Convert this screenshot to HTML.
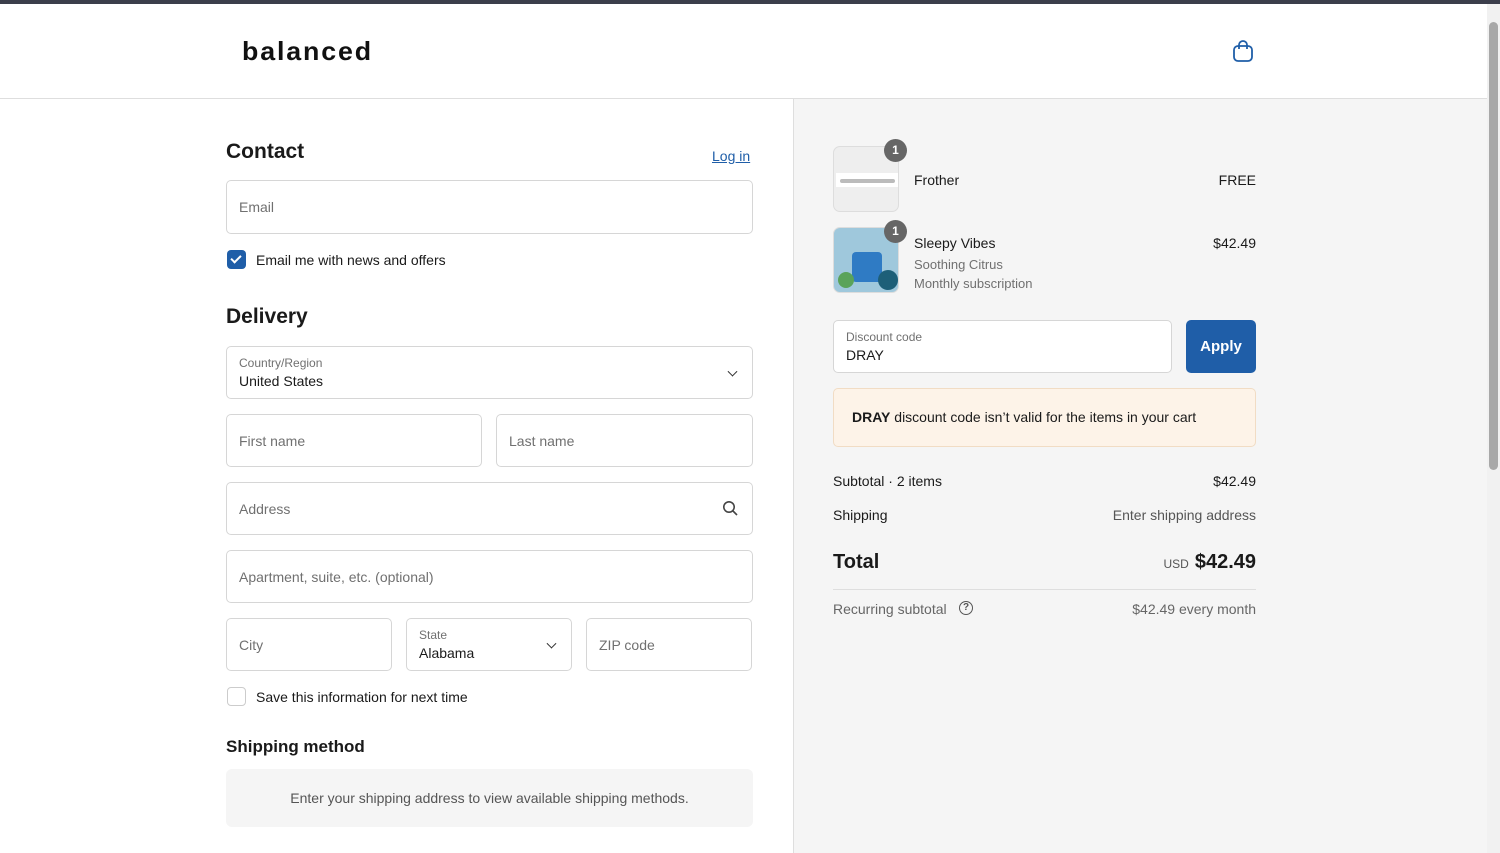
<!DOCTYPE html>
<html><head><style>
*{box-sizing:border-box;margin:0;padding:0}
body{width:1500px;height:853px;overflow:hidden;font-family:"Liberation Sans",sans-serif;color:#1a1a1a;background:#fff;position:relative}
.top{position:absolute;left:0;top:0;width:1500px;height:4px;background:#3b3e4b}
.hdr{position:absolute;left:0;top:4px;width:1487px;height:95px;border-bottom:1px solid #dedede;background:#fff}
.logo{position:absolute;left:242px;top:32px;font-size:26px;letter-spacing:1.8px;font-weight:bold;color:#111;transform:scaleX(1.03);transform-origin:left}
.right{position:absolute;left:793px;top:99px;width:694px;height:754px;background:#f5f5f5;border-left:1px solid #dedede}
.sb{position:absolute;left:1487px;top:4px;width:13px;height:849px;background:#f1f1f1}
.sb div{position:absolute;left:2px;top:18px;width:9px;height:448px;background:#a8a8a8;border-radius:5px}
.in{position:absolute;border:1px solid #d6d6d6;border-radius:5px;background:#fff;font-size:14px;color:#707070}
.in .p{position:absolute;left:12px;top:50%;transform:translateY(-50%)}
.lab{position:absolute;left:12px;top:9px;font-size:12px;color:#707070}
.val{position:absolute;left:12px;top:26px;font-size:14px;color:#1a1a1a}
h2{position:absolute;font-size:21px;font-weight:bold}
.t{position:absolute;font-size:14px}
.r{position:absolute;font-size:14px;right:244px;text-align:right;white-space:nowrap}
.chev{position:absolute;right:16px;top:50%;width:7px;height:7px;border-right:1.6px solid #333;border-bottom:1.6px solid #333;transform:translateY(-70%) rotate(45deg)}
.thumb{position:absolute;width:66px;height:66px;border-radius:7px;border:1px solid #ddd;background:#eee;overflow:hidden}
.badge{position:absolute;width:23px;height:23px;border-radius:50%;background:#666;color:#fff;font-size:12px;font-weight:bold;text-align:center;line-height:23px}
</style></head><body>
<div class="top"></div>
<div class="hdr"><div class="logo">balanced</div>
<svg style="position:absolute;left:1232px;top:35px" width="22" height="24" viewBox="0 0 22 24" fill="none" stroke="#1f5ea8" stroke-width="1.8"><rect x="2" y="7" width="18" height="15" rx="4"/><path d="M7 10V6a4 4 0 0 1 8 0v4"/></svg>
</div>
<div class="right"></div>
<div class="sb"><div></div></div>

<h2 style="left:226px;top:140px">Contact</h2>
<div class="t" style="left:712px;top:148px;color:#1f5ea8;text-decoration:underline">Log in</div>
<div class="in" style="left:226px;top:180px;width:527px;height:54px"><span class="p">Email</span></div>
<div style="position:absolute;left:227px;top:250px;width:19px;height:19px;background:#1f5ea8;border-radius:4px"><div style="position:absolute;left:6px;top:3px;width:6px;height:10px;border-right:2px solid #fff;border-bottom:2px solid #fff;transform:rotate(45deg)"></div></div>
<div class="t" style="left:256px;top:252px">Email me with news and offers</div>

<h2 style="left:226px;top:305px">Delivery</h2>
<div class="in" style="left:226px;top:346px;width:527px;height:53px"><div class="lab">Country/Region</div><div class="val">United States</div><div class="chev"></div></div>
<div class="in" style="left:226px;top:414px;width:256px;height:53px"><span class="p">First name</span></div>
<div class="in" style="left:496px;top:414px;width:257px;height:53px"><span class="p">Last name</span></div>
<div class="in" style="left:226px;top:482px;width:527px;height:53px"><span class="p">Address</span>
<svg style="position:absolute;right:14px;top:17px" width="16" height="16" viewBox="0 0 16 16" fill="none" stroke="#444" stroke-width="1.6"><circle cx="7" cy="7" r="5.2"/><path d="M11 11l4 4"/></svg></div>
<div class="in" style="left:226px;top:550px;width:527px;height:53px"><span class="p">Apartment, suite, etc. (optional)</span></div>
<div class="in" style="left:226px;top:618px;width:166px;height:53px"><span class="p">City</span></div>
<div class="in" style="left:406px;top:618px;width:166px;height:53px"><div class="lab">State</div><div class="val">Alabama</div><div class="chev"></div></div>
<div class="in" style="left:586px;top:618px;width:166px;height:53px"><span class="p">ZIP code</span></div>
<div style="position:absolute;left:227px;top:687px;width:19px;height:19px;border:1px solid #ccc;border-radius:4px;background:#fff"></div>
<div class="t" style="left:256px;top:689px">Save this information for next time</div>
<div class="t" style="left:226px;top:737px;font-size:17px;font-weight:bold">Shipping method</div>
<div style="position:absolute;left:226px;top:769px;width:527px;height:58px;background:#f5f5f5;border-radius:6px;font-size:14px;color:#555;text-align:center;line-height:58px">Enter your shipping address to view available shipping methods.</div>

<div class="thumb" style="left:833px;top:146px"><div style="position:absolute;left:2px;top:26px;width:62px;height:14px;background:#fff"></div><div style="position:absolute;left:6px;top:32px;width:55px;height:4px;background:#bbb;border-radius:2px"></div></div>
<div class="badge" style="left:884px;top:139px">1</div>
<div class="t" style="left:914px;top:172px">Frother</div>
<div class="r" style="top:172px">FREE</div>
<div class="thumb" style="left:833px;top:227px;background:#9fc8dc"><div style="position:absolute;left:18px;top:24px;width:30px;height:30px;background:#2f7bc4;border-radius:4px"></div><div style="position:absolute;left:4px;top:44px;width:16px;height:16px;border-radius:50%;background:#5aa35a"></div><div style="position:absolute;left:44px;top:42px;width:20px;height:20px;border-radius:50%;background:#1d5f78"></div></div>
<div class="badge" style="left:884px;top:220px">1</div>
<div class="t" style="left:914px;top:235px">Sleepy Vibes</div>
<div class="t" style="left:914px;top:257px;font-size:13px;color:#707070">Soothing Citrus</div>
<div class="t" style="left:914px;top:276px;font-size:13px;color:#707070">Monthly subscription</div>
<div class="r" style="top:235px">$42.49</div>

<div class="in" style="left:833px;top:320px;width:339px;height:53px"><div class="lab">Discount code</div><div class="val">DRAY</div></div>
<div style="position:absolute;left:1186px;top:320px;width:70px;height:53px;background:#1f5ea8;border-radius:5px;color:#fff;font-weight:bold;font-size:15px;text-align:center;line-height:53px">Apply</div>
<div style="position:absolute;left:833px;top:388px;width:423px;height:59px;background:#fdf3e8;border:1px solid #f1dcc4;border-radius:5px;font-size:14px;line-height:57px;padding-left:18px"><b>DRAY</b> discount code isn’t valid for the items in your cart</div>

<div class="t" style="left:833px;top:473px">Subtotal · 2 items</div>
<div class="r" style="top:473px">$42.49</div>
<div class="t" style="left:833px;top:507px">Shipping</div>
<div class="r" style="top:507px;color:#555">Enter shipping address</div>
<div class="t" style="left:833px;top:551px;font-size:20px;font-weight:bold">Total</div>
<div class="r" style="top:551px;font-size:20px;font-weight:bold"><span style="font-size:12px;font-weight:normal;color:#555;margin-right:6px">USD</span>$42.49</div>
<div style="position:absolute;left:833px;top:589px;width:423px;height:1px;background:#dedede"></div>
<div class="t" style="left:833px;top:601px;color:#666">Recurring subtotal</div>
<div style="position:absolute;left:959px;top:601px;width:14px;height:14px;border:1.4px solid #555;border-radius:50%;font-size:10px;text-align:center;line-height:12px;color:#555;font-weight:bold">?</div>
<div class="r" style="top:601px;color:#666">$42.49 every month</div>
</body></html>
